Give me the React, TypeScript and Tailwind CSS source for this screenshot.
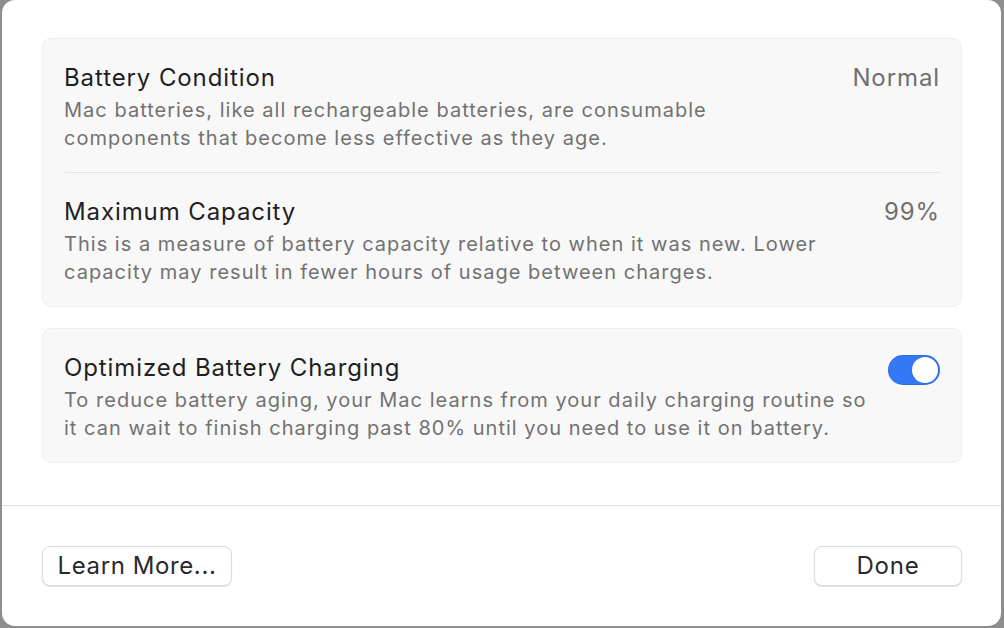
import React from "react";

const font = { fontFamily: "Inter, 'Noto Sans', sans-serif" };

function Row({ title, desc, right }: { title: string; desc: React.ReactNode; right: React.ReactNode }) {
  return (
    <div className="flex items-start justify-between">
      <div className="flex flex-col -ml-[1px]">
        <div className="text-[24px] leading-[28px] text-[#1f1f1f] tracking-[0.9px]">{title}</div>
        <div className="mt-[4px] text-[20px] leading-[28px] text-[#727272] tracking-[1.02px]">{desc}</div>
      </div>
      {right}
    </div>
  );
}

export default function App() {
  return (
    <div className="w-[1004px] h-[628px] bg-[#8e8e8e] pl-[2px] pr-[3px] pb-[2px] overflow-hidden" style={font}>
      <div className="w-full h-full bg-white rounded-[13px] flex flex-col overflow-hidden">
        <div className="pl-[40px] pr-[39px] pt-[38px] flex flex-col gap-[21px]">
          <div className="bg-[#f8f8f8] border border-[#efefef] rounded-[9px] px-[22px]">
            <div className="pt-[25px] pb-[20px] border-b border-[#e2e2e2]">
              <Row
                title="Battery Condition"
                desc={<>Mac batteries, like all rechargeable batteries, are consumable<br />components that become less effective as they age.</>}
                right={<div className="text-[24px] leading-[28px] text-[#707070] tracking-[0.9px] -mr-[1px]">Normal</div>}
              />
            </div>
            <div className="pt-[25px] pb-[20px]">
              <Row
                title="Maximum Capacity"
                desc={<>This is a measure of battery capacity relative to when it was new. Lower<br />capacity may result in fewer hours of usage between charges.</>}
                right={<div className="text-[24px] leading-[28px] text-[#707070] tracking-[0.9px] -mr-[1px]">99%</div>}
              />
            </div>
          </div>
          <div className="bg-[#f8f8f8] border border-[#efefef] rounded-[9px] px-[22px] pt-[25px] pb-[20px]">
            <Row
              title="Optimized Battery Charging"
              desc={<>To reduce battery aging, your Mac learns from your daily charging routine so<br />it can wait to finish charging past 80% until you need to use it on battery.</>}
              right={
                <div className="mt-[1px] -mr-[1px] w-[52px] h-[30px] rounded-full bg-[#3478f6] flex items-center justify-end pr-[2px] shadow-[inset_0_0_0_1px_rgba(0,0,0,0.08)]">
                  <div className="w-[26px] h-[26px] rounded-full bg-white shadow-[0_0_0_1px_rgba(0,0,0,0.06)]" />
                </div>
              }
            />
          </div>
        </div>
        <div className="mt-[42px] h-px bg-[#e0e0e0]" />
        <div className="pl-[40px] pr-[39px] py-[40px] flex justify-between">
          <button className="w-[190px] h-[40px] bg-white rounded-[8px] border border-[#dcdcdc] shadow-[0_1px_1px_rgba(0,0,0,0.12)] text-[24px] text-[#2a2a2a] tracking-[0.6px]">
            Learn More...
          </button>
          <button className="w-[148px] h-[40px] bg-white rounded-[8px] border border-[#dcdcdc] shadow-[0_1px_1px_rgba(0,0,0,0.12)] text-[24px] text-[#2a2a2a] tracking-[0.8px]">
            Done
          </button>
        </div>
      </div>
    </div>
  );
}
